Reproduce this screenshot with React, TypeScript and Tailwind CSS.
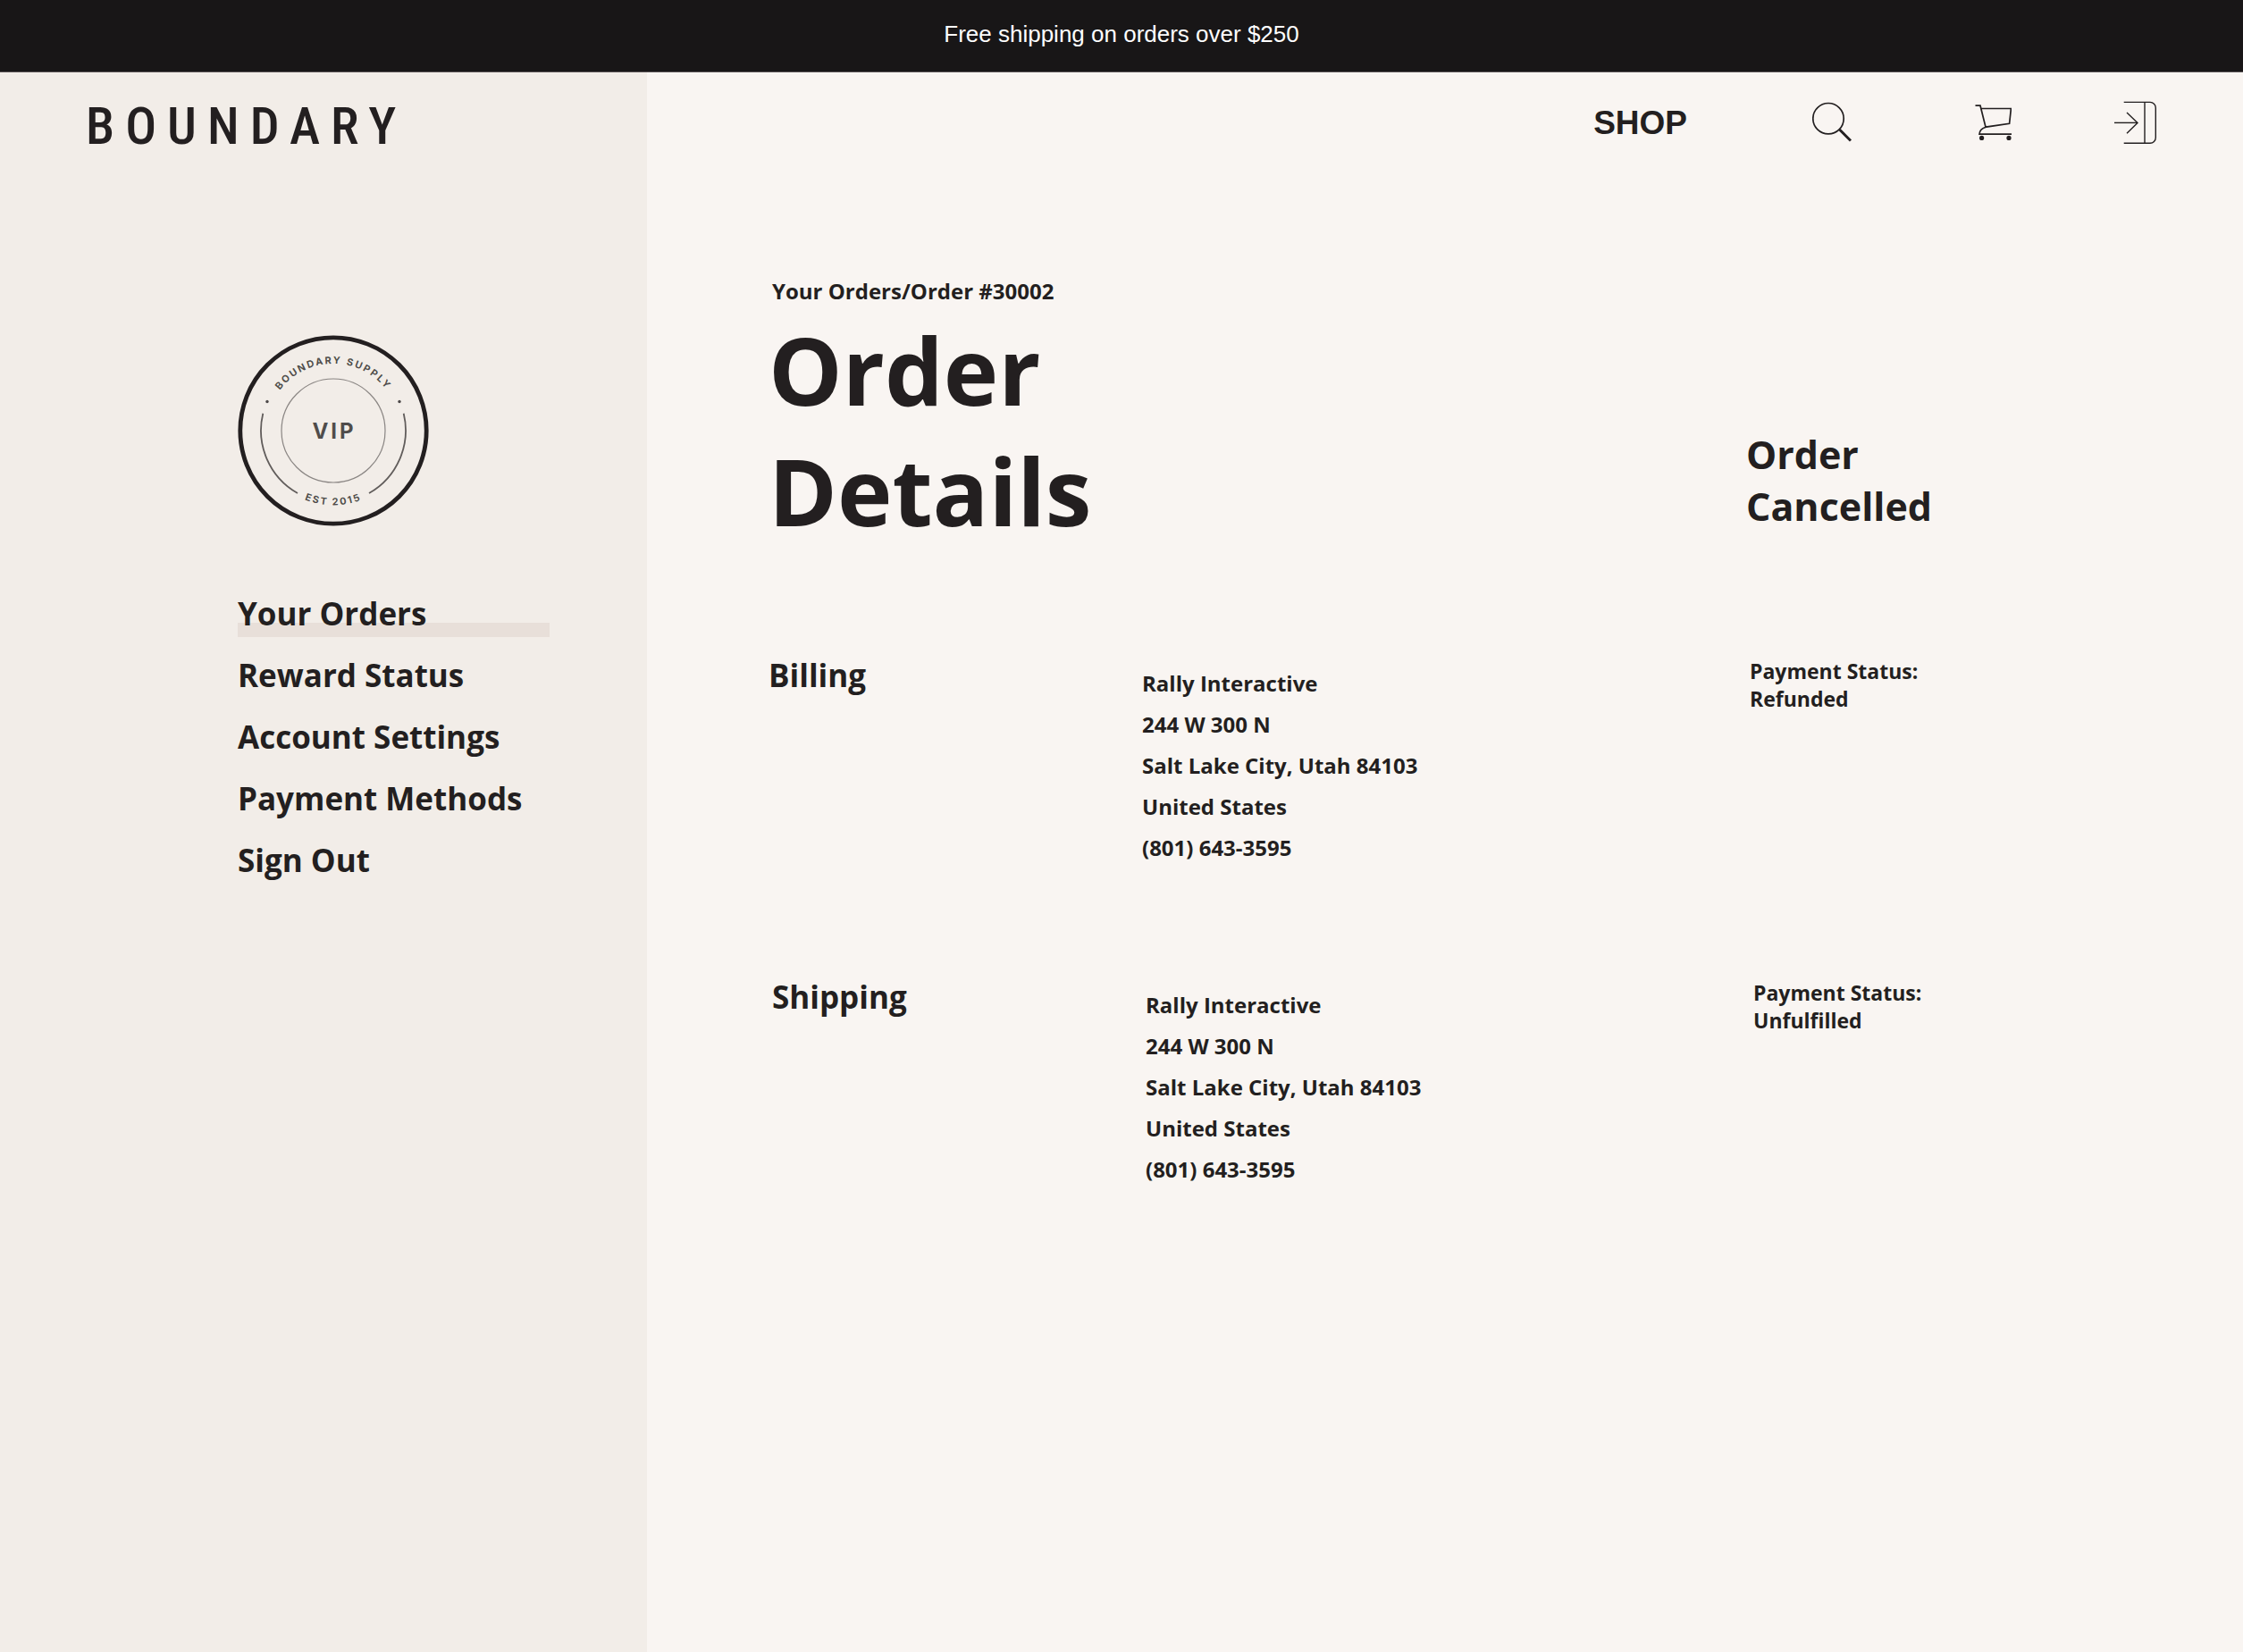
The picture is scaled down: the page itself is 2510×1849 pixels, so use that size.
import React from "react";

const navItems = [
  { label: "Your Orders", active: true },
  { label: "Reward Status", active: false },
  { label: "Account Settings", active: false },
  { label: "Payment Methods", active: false },
  { label: "Sign Out", active: false },
];

const address = [
  "Rally Interactive",
  "244 W 300 N",
  "Salt Lake City, Utah 84103",
  "United States",
  "(801) 643-3595",
];

function SearchIcon() {
  return (
    <svg width="44" height="46" viewBox="0 0 44 46" fill="none" stroke="currentColor" aria-hidden="true">
      <circle cx="18" cy="18.7" r="17.2" strokeWidth="1.7" />
      <path d="M30.5 31 L43 43.5" strokeWidth="3" />
    </svg>
  );
}

function CartIcon() {
  return (
    <svg width="41" height="42" viewBox="0 0 41 42" fill="none" stroke="currentColor" strokeWidth="1.7" aria-hidden="true">
      <path d="M0.5 2.2 H6 L12 26.2 L38.6 22.3 L40.4 5.5 H7" />
      <path d="M12 26.2 C7.5 27.6 5.2 30.6 5 34.2 H41" />
      <circle cx="7.6" cy="38.4" r="2.6" fill="currentColor" stroke="none" />
      <circle cx="38" cy="38.4" r="2.6" fill="currentColor" stroke="none" />
    </svg>
  );
}

function ExitIcon() {
  return (
    <svg width="48" height="49" viewBox="0 0 48 49" fill="none" stroke="currentColor" strokeWidth="1.4" aria-hidden="true">
      <path d="M11.7 1.4 H41 A6.3 6.3 0 0 1 47.3 7.7 V41 A6.3 6.3 0 0 1 41 47.3 H11.7" />
      <path d="M35 1.4 V47.3" />
      <path d="M1 24.4 H27" />
      <path d="M15 13 L27 24.4 L15 36.3" />
    </svg>
  );
}

function VipBadge() {
  return (
    <svg
      width="214"
      height="214"
      viewBox="0 0 214 214"
      fill="none"
      stroke="#231f20"
      role="img"
      aria-label="Boundary Supply VIP, est 2015"
    >
      <defs>
        <path id="badge-top" d="M32 107 A75 75 0 0 1 182 107" />
        <path id="badge-bottom" d="M23.5 107 A83.5 83.5 0 0 0 190.5 107" />
      </defs>
      <circle cx="107" cy="107" r="104.2" strokeWidth="4.8" />
      <circle cx="107" cy="107" r="58" strokeWidth="1.2" strokeOpacity="0.5" />
      <path d="M28.3 87.7 A80.8 80.8 0 0 0 67 177" strokeWidth="1.8" strokeOpacity="0.7" />
      <path d="M185.7 87.7 A80.8 80.8 0 0 1 147 177" strokeWidth="1.8" strokeOpacity="0.7" />
      <g fill="#231f20" fillOpacity="0.8" stroke="none" className="font-['Inter',sans-serif] font-bold">
        <circle cx="33" cy="74.5" r="1.7" />
        <circle cx="181" cy="74.5" r="1.7" />
        <text className="text-[11px] tracking-[2px]" textAnchor="middle">
          <textPath href="#badge-top" startOffset="50%">BOUNDARY SUPPLY</textPath>
        </text>
        <text className="text-[11px] tracking-[2px]" textAnchor="middle">
          <textPath href="#badge-bottom" startOffset="50%">EST 2015</textPath>
        </text>
        <text x="108" y="116" className="text-[24px] tracking-[3px]" textAnchor="middle">VIP</text>
      </g>
    </svg>
  );
}

function Section({ title, status, className }: { title: string; status: string; className: string }) {
  return (
    <section className={`grid grid-cols-[418fr_680fr_552fr] ${className}`}>
      <h2 className="text-[35px] leading-[48px]">{title}</h2>
      <address className="pt-2.5 text-[24px] leading-[46px] not-italic">
        {address.map((line) => (
          <p key={line}>{line}</p>
        ))}
      </address>
      <p className="pt-1 text-[23px] leading-[31px]">
        Payment Status:
        <br />
        {status}
      </p>
    </section>
  );
}

export default function App() {
  return (
    <div className="flex min-h-screen flex-col bg-[#f9f5f2] font-['Open_Sans',sans-serif] font-bold text-[#231f20]">
      <div className="flex h-[81px] items-center justify-center border-b border-[#575052] bg-[#181617] pb-1 font-['Liberation_Sans',sans-serif] text-[26px] font-normal text-white">
        Free shipping on orders over $250
      </div>

      <div className="flex grow">
        <aside className="w-[724px] shrink-0 bg-[#f2ede8]">
          <div className="flex h-[112px] items-center pt-2 pl-[96px]">
            <a
              href="#"
              className="font-['Roboto_Condensed','Roboto',sans-serif] text-[58px] leading-none font-medium tracking-[12px]"
            >
              BOUNDARY
            </a>
          </div>
          <div className="pt-[182px] pl-[266px]">
            <VipBadge />
            <nav aria-label="Account" className="mt-[63px] w-[349px]">
              <ul>
                {navItems.map((item) => (
                  <li key={item.label} className="relative isolate text-[35px] leading-[69px] whitespace-nowrap">
                    {item.active && <span className="absolute inset-x-0 bottom-2 -z-10 h-4 bg-[#e8dfd9]" />}
                    <a href="#" aria-current={item.active ? "page" : undefined}>
                      {item.label}
                    </a>
                  </li>
                ))}
              </ul>
            </nav>
          </div>
        </aside>

        <div className="grow">
          <header className="flex h-[112px] items-center justify-end gap-[114px] pr-[97px]">
            <a href="#" className="font-['Liberation_Sans',sans-serif] text-[37px] leading-none">
              SHOP
            </a>
            <button type="button" aria-label="Search" className="pr-6 pl-[26px]">
              <SearchIcon />
            </button>
            <button type="button" aria-label="Cart">
              <CartIcon />
            </button>
            <button type="button" aria-label="Sign in">
              <ExitIcon />
            </button>
          </header>

          <main className="pt-[117px] pl-[136px]">
            <p className="pl-1 text-[24px] leading-8">
              <a href="#">Your Orders</a>/Order #30002
            </p>
            <div className="mt-1 grid grid-cols-[1094fr_556fr] items-end">
              <h1 className="text-[104px] leading-[135px]">
                Order
                <br />
                Details
              </h1>
              <p className="pb-5 text-[43px] leading-[58px]">
                Order
                <br />
                Cancelled
              </p>
            </div>
            <Section title="Billing" status="Refunded" className="mt-[116px]" />
            <Section title="Shipping" status="Unfulfilled" className="-mr-1 mt-[120px] pl-1" />
          </main>
        </div>
      </div>
    </div>
  );
}
